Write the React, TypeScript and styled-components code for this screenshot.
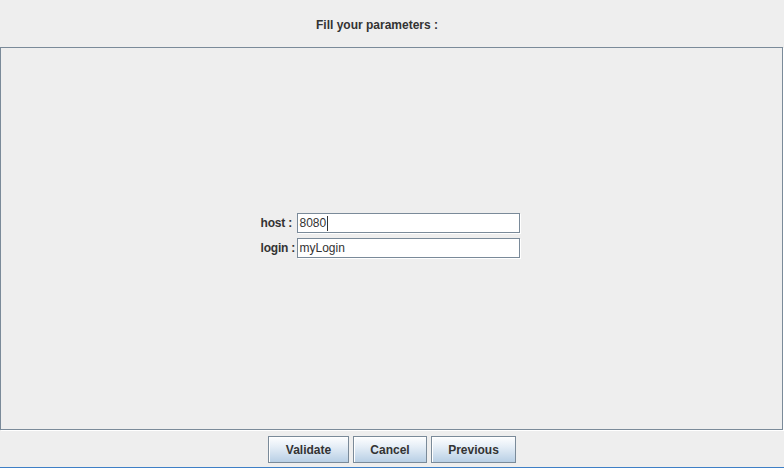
import React from "react";
import styled, { createGlobalStyle } from "styled-components";

const Global = createGlobalStyle`
  html, body { margin: 0; padding: 0; background: #eeeeee; }
  body { font-family: "Liberation Sans", Arial, sans-serif; }
`;

const Window = styled.div`
  width: 784px;
  height: 468px;
  display: flex;
  flex-direction: column;
  background: #eeeeee;
  box-sizing: border-box;
  border-bottom: 1px solid #3d7fc6;
  color: #333333;
`;

const Header = styled.div`
  height: 47px;
  display: flex;
  align-items: flex-start;
  justify-content: center;
  box-sizing: border-box;
  padding: 18px 30px 0 0;
  font-size: 12px;
  font-weight: bold;
`;

const Panel = styled.div`
  height: 383px;
  width: 783px;
  box-sizing: border-box;
  border: 1px solid #7a8a99;
  box-shadow: 1px 1px 0 #ffffff;
  display: flex;
  align-items: center;
  justify-content: center;
  padding: 0 2px 0 0;
`;

const Form = styled.div`
  display: grid;
  grid-template-columns: 36px 224px;
  row-gap: 5px;
  align-items: center;
  margin-top: -6px;
`;

const Label = styled.label`
  font-size: 12px;
  font-weight: bold;
  white-space: nowrap;
  letter-spacing: -0.2px;
`;

const Field = styled.div`
  height: 20px;
  width: 223px;
  box-sizing: border-box;
  border: 1px solid #7a8a99;
  box-shadow: 1px 1px 0 #ffffff;
  background: #ffffff;
  font-size: 12px;
  line-height: 18px;
  padding-left: 2px;
  display: flex;
  align-items: center;
`;

const Caret = styled.span`
  display: inline-block;
  width: 1px;
  height: 15px;
  background: #333333;
  margin-left: 1px;
`;

const Footer = styled.div`
  flex: 1;
  display: flex;
  justify-content: center;
  align-items: flex-start;
  gap: 4px;
  padding-top: 6px;
`;

const Button = styled.button<{ $w: number }>`
  width: ${(p) => p.$w}px;
  height: 27px;
  box-sizing: border-box;
  border: 1px solid #7a8a99;
  box-shadow: inset 1px 1px 0 #ffffff;
  background: linear-gradient(to bottom, #fdfeff 0%, #e4edf6 40%, #b8cfe5 100%);
  font-family: "Liberation Sans", Arial, sans-serif;
  font-size: 12px;
  font-weight: bold;
  color: #333333;
  padding: 0;
  margin: 0;
`;

export default function App() {
  return (
    <>
      <Global />
      <Window>
        <Header>Fill your parameters :</Header>
        <Panel>
          <Form>
            <Label>host :</Label>
            <Field>
              8080
              <Caret />
            </Field>
            <Label>login :</Label>
            <Field>myLogin</Field>
          </Form>
        </Panel>
        <Footer>
          <Button $w={81}>Validate</Button>
          <Button $w={74}>Cancel</Button>
          <Button $w={85}>Previous</Button>
        </Footer>
      </Window>
    </>
  );
}
